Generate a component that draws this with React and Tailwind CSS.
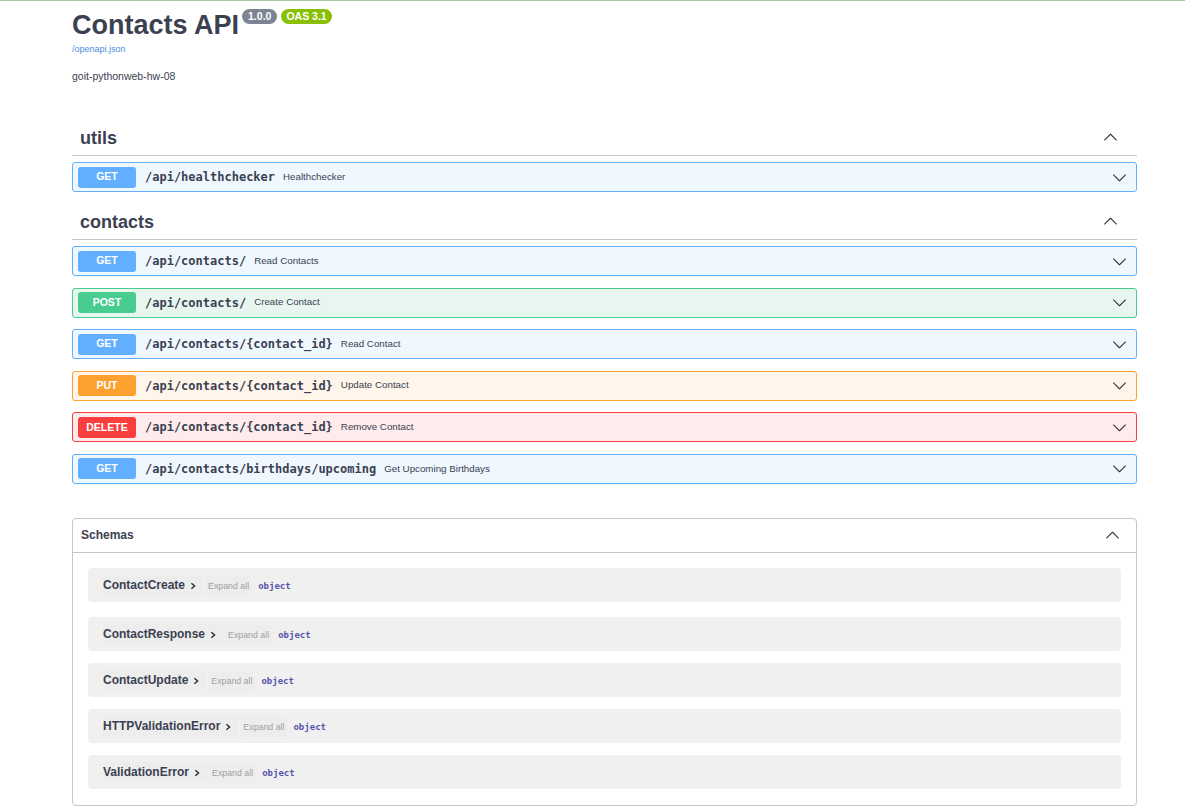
import React from "react";

const SANS = { fontFamily: '"Liberation Sans", Arial, sans-serif' };
const MONO = { fontFamily: '"DejaVu Sans Mono", monospace' };

function Arrow({ up = false, className = "" }) {
  return (
    <svg
      viewBox="0 0 20 20"
      className={className}
      style={{ transform: up ? "rotate(180deg)" : undefined }}
    >
      <path
        fill="#303030"
        d="M17.418 6.109c.272-.268.709-.268.979 0s.271.701 0 .969l-7.908 7.83c-.27.268-.707.268-.979 0l-7.908-7.83c-.27-.268-.27-.701 0-.969.271-.268.709-.268.979 0L10 13.25l7.418-7.141z"
      />
    </svg>
  );
}

const STYLES = {
  GET: { box: "border-[#61affe] bg-[#eff7ff]", badge: "bg-[#61affe]" },
  POST: { box: "border-[#49cc90] bg-[#e8f6f0]", badge: "bg-[#49cc90]" },
  PUT: { box: "border-[#fca130] bg-[#fff5ea]", badge: "bg-[#fca130]" },
  DELETE: { box: "border-[#f93e3e] bg-[#feebeb]", badge: "bg-[#f93e3e]" },
};

function Op({ m, path, desc }) {
  const s = STYLES[m];
  return (
    <div className={`flex h-[30px] items-center rounded-[3px] border pl-[5px] pr-[9px] ${s.box}`}>
      <div
        className={`flex h-[21px] w-[58px] items-center justify-center rounded-[3px] text-[10.5px] font-bold text-white ${s.badge}`}
        style={SANS}
      >
        {m}
      </div>
      <div className="ml-[9px] text-[12px] font-bold text-[#3b4151]" style={MONO}>
        {path}
      </div>
      <div className="ml-[8px] text-[9.75px] text-[#3b4151]" style={SANS}>
        {desc}
      </div>
      <div className="flex-1" />
      <Arrow className="h-[15px] w-[15px]" />
    </div>
  );
}

function TagHeading({ name }) {
  return (
    <div className="flex h-[36px] items-center border-b border-[#c4c6cb] pl-[8px] pr-[19px]">
      <div className="mt-[1px] text-[18px] font-bold text-[#3b4151]" style={SANS}>
        {name}
      </div>
      <div className="flex-1" />
      <Arrow up className="h-[15px] w-[15px]" />
    </div>
  );
}

function Model({ name, extra = "" }) {
  return (
    <div className={`flex h-[34px] items-center rounded-[4px] bg-[#f0f0f0] pl-[15px] ${extra}`}>
      <div className="mt-[1px] flex h-[20px] items-center rounded-[2px] bg-[#ededed] pr-[6px]">
        <span className="text-[12px] font-bold text-[#3b4151]" style={SANS}>
          {name}
        </span>
        <svg viewBox="0 0 10 10" className="ml-[4px] mt-[2px] h-[8px] w-[8px]">
          <path d="M3 1.5 L7 5 L3 8.5" fill="none" stroke="#303030" strokeWidth="1.8" />
        </svg>
      </div>
      <div
        className="ml-[2px] mt-[3px] flex h-[20px] items-center rounded-[2px] bg-[#ededed] px-[3px] text-[8.8px] text-[#a0a0a0]"
        style={SANS}
      >
        Expand all
      </div>
      <div className="ml-[6px] mt-[3px] text-[9px] font-bold text-[#55a]" style={MONO}>
        object
      </div>
    </div>
  );
}

export default function App() {
  const contacts = [
    { m: "GET", path: "/api/contacts/", desc: "Read Contacts" },
    { m: "POST", path: "/api/contacts/", desc: "Create Contact" },
    { m: "GET", path: "/api/contacts/{contact_id}", desc: "Read Contact" },
    { m: "PUT", path: "/api/contacts/{contact_id}", desc: "Update Contact" },
    { m: "DELETE", path: "/api/contacts/{contact_id}", desc: "Remove Contact" },
    { m: "GET", path: "/api/contacts/birthdays/upcoming", desc: "Get Upcoming Birthdays" },
  ];
  return (
    <div className="min-h-[811px] bg-white text-[#3b4151]" style={SANS}>
      <div className="h-px bg-[#a3cda3]" />
      <div className="ml-[72px] w-[1065px]">
        <div className="mt-[8px] flex items-start">
          <h1 className="text-[27px] font-bold leading-[32px] text-[#3b4151]" style={SANS}>
            Contacts API
          </h1>
          <div className="ml-[3px] mt-[0px] flex gap-[4px]">
            <span className="flex h-[15px] items-center rounded-full bg-[#7d8492] px-[6px] text-[10.5px] font-bold text-white">
              1.0.0
            </span>
            <span className="flex h-[15px] items-center rounded-full bg-[#89bf04] px-[5px] text-[10.5px] font-bold text-white">
              OAS 3.1
            </span>
          </div>
        </div>
        <div className="mt-[2px] text-[9px] leading-[12px] text-[#4990e2]">/openapi.json</div>
        <div className="mt-[14px] text-[10.5px] leading-[14px] text-[#3b4151]">goit-pythonweb-hw-08</div>

        <div className="mt-[37px]">
          <TagHeading name="utils" />
          <div className="mt-[6px]">
            <Op m="GET" path="/api/healthchecker" desc="Healthchecker" />
          </div>
        </div>

        <div className="mt-[12px]">
          <TagHeading name="contacts" />
          <div className="mt-[6px] flex flex-col gap-[11.6px]">
            {contacts.map((o, i) => (
              <Op key={i} {...o} />
            ))}
          </div>
        </div>

        <div className="mt-[34px] rounded-[4px] border border-[#c4c6cb]">
          <div className="flex h-[34px] items-center border-b border-[#c4c6cb] pl-[8px] pr-[16px]">
            <div className="text-[12px] font-bold text-[#3b4151]">Schemas</div>
            <div className="flex-1" />
            <Arrow up className="h-[15px] w-[15px]" />
          </div>
          <div className="px-[15px] pb-[16px] pt-[15px]">
            <Model name="ContactCreate" extra="mb-[15px]" />
            <Model name="ContactResponse" extra="mb-[12px]" />
            <Model name="ContactUpdate" extra="mb-[12px]" />
            <Model name="HTTPValidationError" extra="mb-[12px]" />
            <Model name="ValidationError" />
          </div>
        </div>
      </div>
    </div>
  );
}
